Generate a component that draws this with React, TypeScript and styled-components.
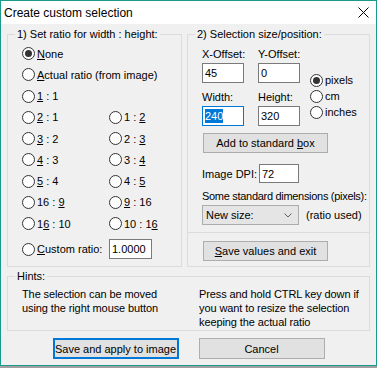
import React from 'react';
import styled, { createGlobalStyle } from 'styled-components';

const GlobalStyle = createGlobalStyle`
  html, body {
    margin: 0;
    padding: 0;
    background: #a0a0a0;
  }
  body {
    font-family: 'Liberation Sans', Arial, sans-serif;
    font-size: 11px;
    color: #000;
  }
`;

const Window = styled.div`
  width: 377px;
  height: 366px;
  box-sizing: border-box;
  border: 1px solid #1a9a8a;
  background: #f0f0f0;
  display: flex;
  flex-direction: column;
`;

const TitleBar = styled.div`
  height: 23px;
  flex: none;
  background: #fff;
  display: flex;
  align-items: center;
  justify-content: space-between;
  padding-left: 3px;
  font-size: 12px;
`;

const CloseBox = styled.div`
  width: 26px;
  height: 23px;
  display: flex;
  align-items: center;
  justify-content: center;
`;

const Body = styled.div`
  flex: 1;
  display: flex;
  flex-direction: column;
  padding: 4px 6px 0;
`;

const TopRow = styled.div`
  display: grid;
  grid-template-columns: 175px 183px;
  column-gap: 5px;
`;

const Group = styled.fieldset`
  margin: 0;
  padding: 0;
  min-width: 0;
  box-sizing: border-box;
  border: 1px solid #dcdcdc;
`;

const Legend = styled.legend`
  margin-left: 7px;
  padding: 0 2px;
  font-size: 11px;
  line-height: 13px;
`;

const RatioGrid = styled.div`
  display: grid;
  grid-template-columns: 87px 1fr;
  grid-auto-rows: 21.25px;
  padding: 2px 0 0 14px;
`;

const Option = styled.label<{ $wide?: boolean }>`
  display: flex;
  align-items: center;
  gap: 2px;
  white-space: nowrap;
  line-height: 14px;
  ${(p) => (p.$wide ? 'grid-column: 1 / -1;' : '')}
`;

const Circle = styled.span<{ $checked?: boolean }>`
  width: 13px;
  height: 13px;
  flex: none;
  box-sizing: border-box;
  border: 1px solid #333;
  border-radius: 50%;
  background: #fff;
  display: flex;
  align-items: center;
  justify-content: center;

  &::after {
    content: '';
    width: 7px;
    height: 7px;
    border-radius: 50%;
    background: #333;
    display: ${(p) => (p.$checked ? 'block' : 'none')};
  }
`;

const CustomRow = styled.div`
  display: grid;
  grid-template-columns: 87px 1fr;
  align-items: center;
  height: 20px;
  margin-top: 5px;
  padding-left: 14px;
`;

const TextBox = styled.div<{ $w: number; $h?: number; $focused?: boolean }>`
  width: ${(p) => p.$w}px;
  height: ${(p) => p.$h ?? 20}px;
  box-sizing: border-box;
  border: 1px solid ${(p) => (p.$focused ? '#0078d7' : '#7a7a7a')};
  background: #fff;
  padding-left: 2px;
  display: flex;
  align-items: center;
  line-height: 14px;
`;

const Selected = styled.span`
  background: #0078d7;
  color: #fff;
`;

const SizePane = styled.div`
  padding: 0 0 5px 14px;
`;

const SizeTop = styled.div`
  display: flex;
  margin-top: 6px;
`;

const FieldGrid = styled.div`
  display: grid;
  grid-template-columns: 56px 52px;
  row-gap: 7px;
`;

const Field = styled.div`
  display: flex;
  flex-direction: column;
  gap: 2px;
  line-height: 14px;
`;

const UnitList = styled.div`
  display: flex;
  flex-direction: column;
  margin-top: 25px;

  & > label {
    height: 16px;
  }
`;

const Button = styled.div<{ $w: number; $h?: number; $focused?: boolean }>`
  width: ${(p) => p.$w}px;
  height: ${(p) => p.$h ?? 20}px;
  box-sizing: border-box;
  background: #e1e1e1;
  border: ${(p) => (p.$focused ? '2px solid #0078d7' : '1px solid #adadad')};
  display: flex;
  align-items: center;
  justify-content: center;
  white-space: nowrap;
`;

const PaneButton = styled(Button)<{ $top?: number }>`
  margin-left: 1px;
  margin-top: ${(p) => p.$top ?? 0}px;
`;

const DpiRow = styled.div`
  display: flex;
  align-items: center;
  margin-top: 11px;
`;

const DpiLabel = styled.span`
  width: 57px;
`;

const StdLabel = styled.div`
  margin-top: 6px;
  line-height: 14px;
  white-space: nowrap;
  letter-spacing: -0.3px;
`;

const ComboRow = styled.div`
  display: flex;
  align-items: center;
  margin-top: 2px;
  gap: 7px;
`;

const Combo = styled.div`
  width: 97px;
  height: 20px;
  box-sizing: border-box;
  background: #e5e5e5;
  border: 1px solid #acacac;
  padding: 0 6px 0 3px;
  display: flex;
  align-items: center;
  justify-content: space-between;
`;

const Divider = styled.div`
  height: 1px;
  background: #dcdcdc;
  margin: 7px 0 8px -14px;
`;

const Hints = styled(Group)`
  margin-top: 3px;
`;

const HintGrid = styled.div`
  display: grid;
  grid-template-columns: 177px 1fr;
  padding: 4px 0 1px 14px;
  line-height: 14px;
  letter-spacing: -0.1px;
`;

const ButtonRow = styled.div`
  display: flex;
  justify-content: center;
  gap: 20px;
  margin-top: 7px;
`;

const Radio = ({ label, checked, wide }: { label: React.ReactNode; checked?: boolean; wide?: boolean }) => (
  <Option $wide={wide}>
    <Circle $checked={checked} />
    <span>{label}</span>
  </Option>
);

const ratios: [React.ReactNode, React.ReactNode][] = [
  [<><u>2</u> : 1</>, <>1 : <u>2</u></>],
  [<><u>3</u> : 2</>, <>2 : <u>3</u></>],
  [<><u>4</u> : 3</>, <>3 : <u>4</u></>],
  [<><u>5</u> : 4</>, <>4 : <u>5</u></>],
  [<>16 : <u>9</u></>, <><u>9</u> : 16</>],
  [<>1<u>6</u> : 10</>, <>10 : 1<u>6</u></>],
];

export default function App() {
  return (
    <>
      <GlobalStyle />
      <Window>
        <TitleBar>
          <span>Create custom selection</span>
          <CloseBox>
            <svg width="11" height="11" viewBox="0 0 11 11">
              <path d="M0.5 0.5 L10.5 10.5 M10.5 0.5 L0.5 10.5" stroke="#000" strokeWidth="1" />
            </svg>
          </CloseBox>
        </TitleBar>
        <Body>
          <TopRow>
            <Group>
              <Legend>1) Set ratio for width : height:</Legend>
              <RatioGrid>
                <Radio wide checked label={<><u>N</u>one</>} />
                <Radio wide label={<><u>A</u>ctual ratio (from image)</>} />
                <Radio wide label={<><u>1</u> : 1</>} />
                {ratios.map(([a, b], i) => (
                  <React.Fragment key={i}>
                    <Radio label={a} />
                    <Radio label={b} />
                  </React.Fragment>
                ))}
              </RatioGrid>
              <CustomRow>
                <Radio label={<><u>C</u>ustom ratio:</>} />
                <TextBox $w={43} $h={20}>1.0000</TextBox>
              </CustomRow>
            </Group>

            <Group>
              <Legend>2) Selection size/position:</Legend>
              <SizePane>
                <SizeTop>
                  <FieldGrid>
                    <Field>
                      <span>X-Offset:</span>
                      <TextBox $w={42}>45</TextBox>
                    </Field>
                    <Field>
                      <span>Y-Offset:</span>
                      <TextBox $w={42}>0</TextBox>
                    </Field>
                    <Field>
                      <span>Width:</span>
                      <TextBox $w={42} $focused>
                        <Selected>240</Selected>
                      </TextBox>
                    </Field>
                    <Field>
                      <span>Height:</span>
                      <TextBox $w={42}>320</TextBox>
                    </Field>
                  </FieldGrid>
                  <UnitList>
                    <Radio checked label="pixels" />
                    <Radio label="cm" />
                    <Radio label="inches" />
                  </UnitList>
                </SizeTop>
                <PaneButton $w={125} $top={7}>
                  <span>Add to standard <u>b</u>ox</span>
                </PaneButton>
                <DpiRow>
                  <DpiLabel>Image DPI:</DpiLabel>
                  <TextBox $w={40} $h={19}>72</TextBox>
                </DpiRow>
                <StdLabel>Some standard dimensions (pixels):</StdLabel>
                <ComboRow>
                  <Combo>
                    <span>New size:</span>
                    <svg width="8" height="5" viewBox="0 0 8 5">
                      <path d="M0.5 0.5 L4 4 L7.5 0.5" fill="none" stroke="#606060" strokeWidth="1" />
                    </svg>
                  </Combo>
                  <span>(ratio used)</span>
                </ComboRow>
                <Divider />
                <PaneButton $w={125}>
                  <span><u>S</u>ave values and exit</span>
                </PaneButton>
              </SizePane>
            </Group>
          </TopRow>

          <Hints>
            <Legend>Hints:</Legend>
            <HintGrid>
              <div>
                The selection can be moved
                <br />
                using the right mouse button
              </div>
              <div>
                Press and hold CTRL key down if
                <br />
                you want to resize the selection
                <br />
                keeping the actual ratio
              </div>
            </HintGrid>
          </Hints>

          <ButtonRow>
            <Button $w={126} $h={21} $focused>Save and apply to image</Button>
            <Button $w={126} $h={21}>Cancel</Button>
          </ButtonRow>
        </Body>
      </Window>
    </>
  );
}
